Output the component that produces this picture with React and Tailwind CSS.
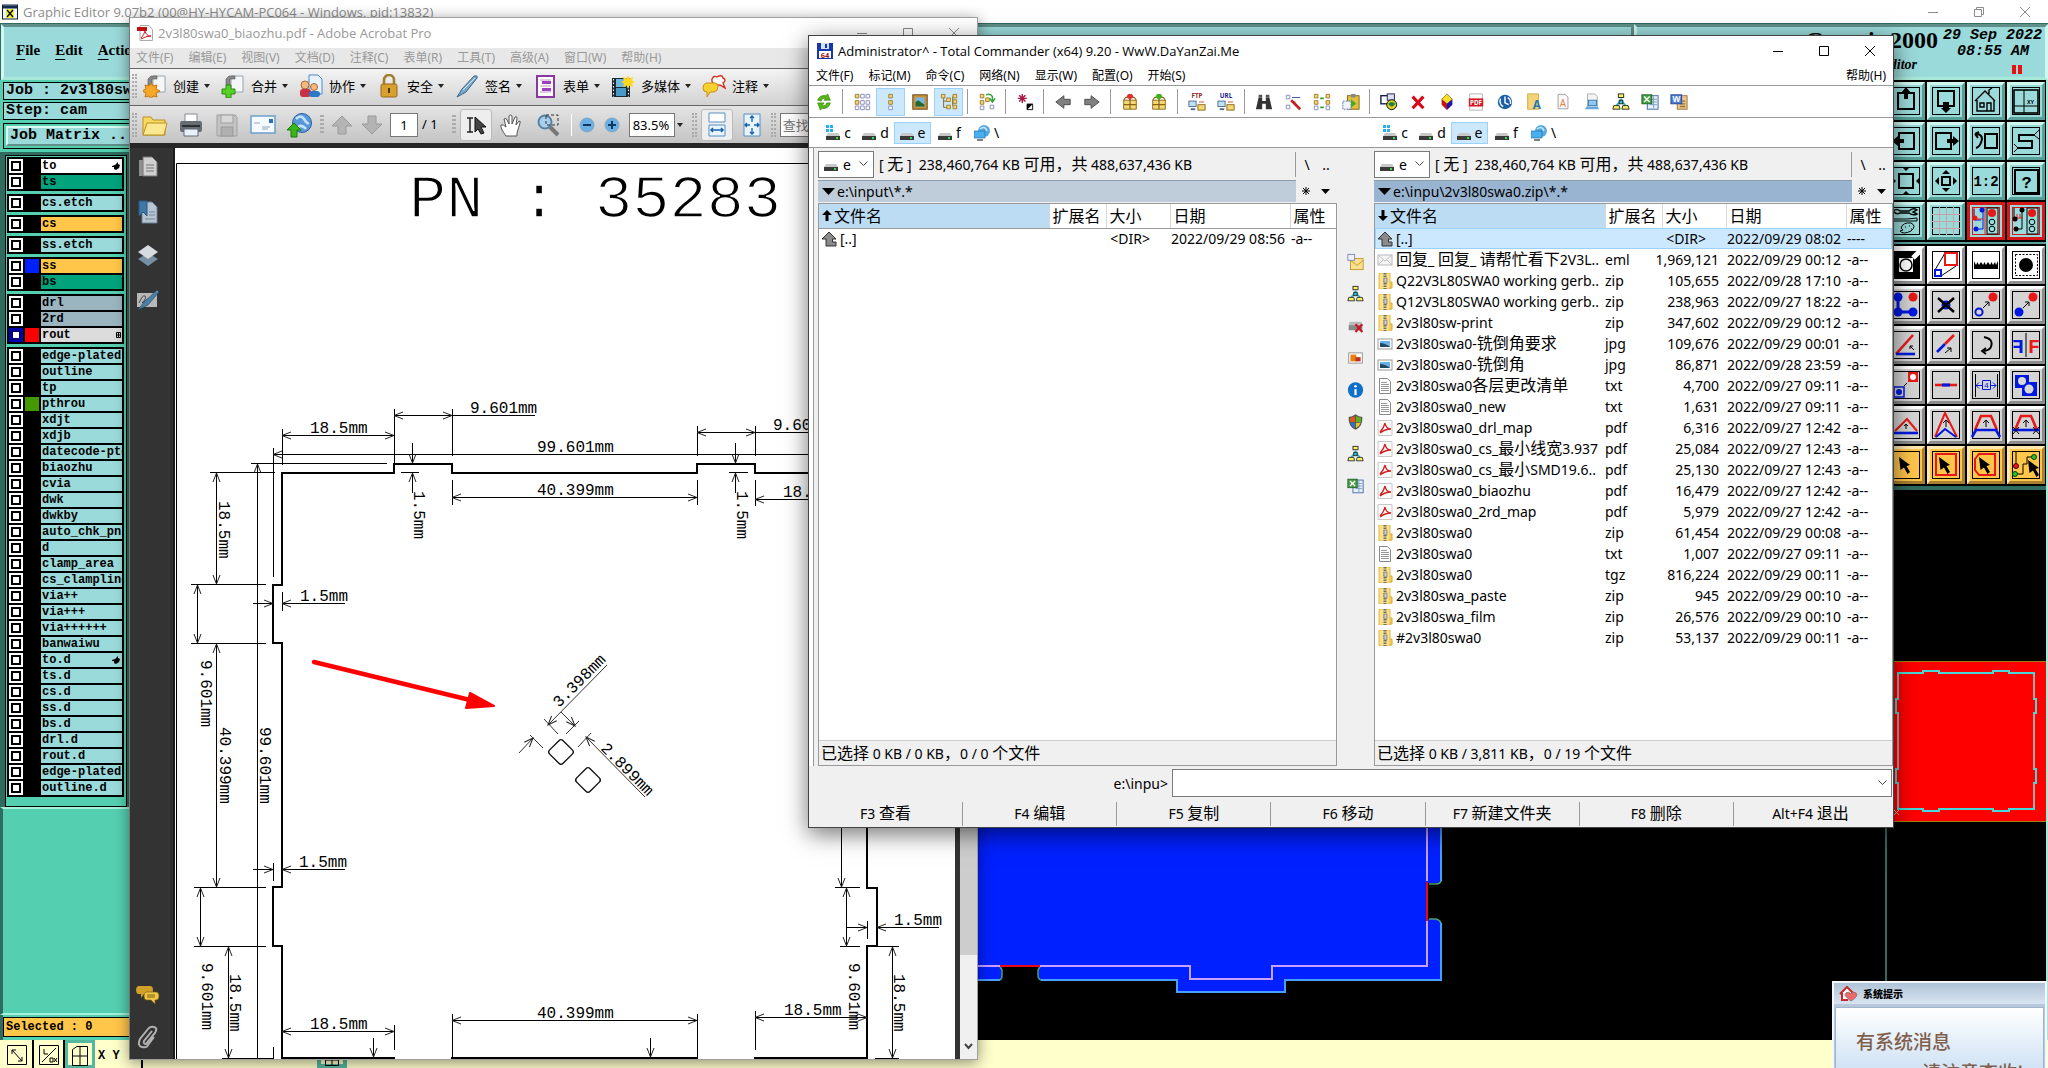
import React from "react";

const SANS = "font-['Noto_Sans','Noto_Sans_CJK_SC',sans-serif]";
const TITLE = "font-['Open_Sans','Noto_Sans_CJK_SC',sans-serif]";
const MONO = "font-['Liberation_Mono','Noto_Sans_CJK_SC',monospace]";

/* Latin text keeps the inherited size, Chinese runs are one step larger. */
function Mixed({ text }) {
  return text.split(/([\u3001-\u9fff\uff00-\uffef]+)/).map((part, i) =>
    i % 2 ? (
      <span key={i} className="text-[16px]">{part}</span>
    ) : (
      <React.Fragment key={i}>{part}</React.Fragment>
    )
  );
}

function Icon({ w = 20, h, vb, children, className = "" }) {
  return (
    <svg width={w} height={h || w} viewBox={vb || `0 0 ${w} ${h || w}`} className={`block shrink-0 ${className}`} aria-hidden="true">
      {children}
    </svg>
  );
}

/* ------------------------------------------------------------------ */
/* CAM editor: layers                                                   */
/* ------------------------------------------------------------------ */

const layerGroups = [
  [{ n: "to", bg: "bg-white", hand: true }, { n: "ts", bg: "bg-[#00a37c]" }],
  [{ n: "cs.etch" }],
  [{ n: "cs", bg: "bg-[#ffc64a]" }],
  [{ n: "ss.etch" }],
  [{ n: "ss", bg: "bg-[#ffc64a]", c: "bg-[#0020ff]" }, { n: "bs", bg: "bg-[#00a37c]" }],
  [{ n: "drl", bg: "bg-[#9ab4c0]" }, { n: "2rd", bg: "bg-[#9ab4c0]" }, { n: "rout", bg: "bg-[#dcdcdc]", c: "bg-[#ff0000]", on: true, grid: true }],
  [
    "edge-plated", "outline", "tp", "pthrou", "xdjt", "xdjb", "datecode-ptd", "biaozhu", "cvia", "dwk", "dwkby",
    "auto_chk_pnl", "d", "clamp_area", "cs_clampline", "via++", "via+++", "via++++++", "banwaiwu", "to.d", "ts.d",
    "cs.d", "ss.d", "bs.d", "drl.d", "rout.d", "edge-plated", "outline.d",
  ].map((n) => ({ n, c: n === "pthrou" ? "bg-[#449900]" : undefined, hand: n === "to.d" })),
];

function Layer({ l }) {
  return (
    <div className="flex h-[14px] gap-[2px]">
      <button aria-label={`select ${l.n}`} className={`flex w-[14px] items-center justify-center ${l.on ? "bg-[#0000b0]" : "bg-white"}`}>
        <span className={`h-[10px] w-[10px] border-2 bg-white ${l.on ? "border-[#000080]" : "border-black"}`} />
      </button>
      <span className={`w-[14px] ${l.c || "bg-black"}`} />
      <button className={`flex flex-1 items-center overflow-hidden pl-[1px] text-left text-[12px] leading-[14px] font-bold whitespace-nowrap ${l.bg || "bg-[#9bdada]"}`}>
        <span className="flex-1">{l.n}</span>
        {l.hand && (
          <Icon w={8} h={8} className="mr-[2px]"><path d="M0 4 L3 3 L6 0 L6 2 L8 3 L7 6 L4 8 L2 7 L2 5 L0 5Z" /></Icon>
        )}
        {l.grid && (
          <Icon w={5} h={6} className="mr-[1px]"><path d="M0.5 .5h4v5h-4zM.5 3h4M2.5 .5v5" fill="none" stroke="#000" /></Icon>
        )}
      </button>
    </div>
  );
}

function LeftColumn() {
  return (
    <aside className={`flex w-[138px] shrink-0 flex-col bg-[#54d0b0] text-black ${MONO}`}>
      <div className="flex flex-col gap-[2px] bg-[#54d0b0] px-[3px] pt-[2px] pb-[3px]">
        <div className="h-[18px] border border-black bg-[#9bdada] pl-[2px] text-[15px] leading-[16px] font-bold whitespace-nowrap">Job : 2v3l80swa0</div>
        <div className="h-[18px] border border-black bg-[#9bdada] pl-[2px] text-[15px] leading-[16px] font-bold whitespace-nowrap">Step: cam</div>
        <button className="mt-[1px] border border-black p-[2px] text-left">
          <span className="block h-[20px] border-2 border-t-[#d8f8f0] border-r-[#5f8f88] border-b-[#5f8f88] border-l-[#d8f8f0] bg-[#9bdada] pl-[2px] text-[15px] leading-[16px] font-bold whitespace-nowrap">Job Matrix ...</span>
        </button>
      </div>
      <div className="bg-[#2f6b5f] pt-[3px] pl-[5px]">
        <div className="w-[122px] border border-black bg-[#54d0b0] pt-[1px] pb-[9px] pl-[1px]">
          <div className="flex w-[117px] flex-col gap-[3px]">
            {layerGroups.map((g, i) => (
              <div key={i} className="flex flex-col gap-[2px] bg-black p-[2px]">
                {g.map((l, j) => <Layer key={j} l={l} />)}
              </div>
            ))}
          </div>
        </div>
      </div>
      <div className="flex-1 border-t-2 border-b-2 border-l-[3px] border-t-[#a8f0dc] border-b-[#a8f0dc] border-l-[#2f6b5f]" />
      <div className="border-l-[3px] border-l-[#2f6b5f] pt-[2px] pb-[3px]">
        <div className="h-[20px] border border-black bg-[#ffc64a] pl-[2px] text-[12px] leading-[18px] font-bold">Selected : 0</div>
      </div>
    </aside>
  );
}

/* ------------------------------------------------------------------ */
/* CAM editor: tool palette                                             */
/* ------------------------------------------------------------------ */

const R = "#e81818";
const B = "#0018e0";
const line = { fill: "none", stroke: "#000", strokeWidth: 2 };
const thin = { fill: "none", stroke: "#000", strokeWidth: 1 };
const red3 = { fill: "none", stroke: R, strokeWidth: 2.6 };
const blue3 = { fill: "none", stroke: B, strokeWidth: 2.6 };
const cursor = "M12 11 L23 19 L19.500 20 L23 26 L20.500 28 L17 21.500 L13.500 24Z";

const paletteTop = [
  ["pan up", <><rect x="11" y="11" width="16" height="16" {...line} /><path d="M19 5 L24 11 H21 V17 H17 V11 H14Z" /></>],
  ["pan down", <><rect x="11" y="9" width="16" height="15" {...line} /><path d="M19 31 L24 26 H22 V20 H16 V26 H14Z" /></>],
  ["home", <><path d="M8 19 L18 9 L28 19 M10 18 V29 H27 V18 M22 12 V8 L25 6 M13 21h4v4h-4z M20 29 V21 H24 V29" {...thin} strokeWidth="1.4" /></>],
  ["view xy", <><rect x="7" y="8" width="24" height="23" {...line} strokeWidth="1.600" /><path d="M17 8 V31 M7 24 H31" {...thin} /><text x="20" y="22" fontSize="6" fontWeight="bold">XY</text></>],
  ["pan left", <><rect x="12" y="11" width="15" height="16" {...line} /><path d="M5 19 L11 14 V17 H17 V21 H11 V24Z" /></>],
  ["pan right", <><rect x="9" y="11" width="15" height="16" {...line} /><path d="M32 19 L26 14 V17 H20 V21 H26 V24Z" /></>],
  ["previous view", <><rect x="18" y="12" width="12" height="14" {...line} /><path d="M8 12 L12 10 M8 12 L11 16 M8 12.500 H12 Q16 14 14.500 19 Q13 25 9 26" {...line} /></>],
  ["serpentine", <><path d="M27 13 H12 V19 H25 V26 H11" {...line} /><path d="M27 13 L32 8 M27 13 L32 17 M11 26 L7 30 M11 26 L7 22" {...thin} /></>],
  ["zoom in", <><rect x="12" y="12" width="14" height="14" {...line} /><path d="M15 5h8l-4 4zM15 33h8l-4-4zM5 15v8l4-4zM33 15v8l-4-4z" /></>],
  ["zoom out", <><rect x="15" y="15" width="8" height="8" {...line} /><path d="M15 12h8l-4-4zM15 26h8l-4 4zM12 15v8l-4-4zM26 15v8l4-4z" /></>],
  ["scale 1:2", <text x="19" y="24" fontSize="14" fontWeight="bold" textAnchor="middle">1:2</text>],
  ["help", <><rect x="8" y="8" width="23" height="23" {...line} /><text x="19.500" y="26" fontSize="17" fontWeight="bold" textAnchor="middle">?</text></>],
  ["options", <><path d="M6 9 Q10 6 13 9 H22 Q26 5 30 8 L26 10 L30 12 Q26 14 22 11 H13 Q9 13 6 9" {...thin} strokeWidth="1.400" /><path d="M6 17 H20 L30 16 V19 L20 19 H6Z" {...thin} /><path d="M14 26 Q16 20 24 21 Q30 24 24 29 Q16 33 13 29 L16 28Z M18 25h1M22 24h1M24 27h1" {...thin} /></>],
  ["grid", <path d="M12.500 5V33M19.500 5V33M26.500 5V33M5 12.500H33M5 19.500H33M5 26.500H33" fill="none" stroke="#c8a0a8" />],
  ["net select", <><path d="M7 7 V18 H14 M16 9 V27 M11 27 H16" fill="none" stroke={B} /><path d="M7 6 V17 M8 17 H16 M18 6 V32" fill="none" stroke={R} /><circle cx="8" cy="16" r="2.500" fill={R} /><circle cx="15" cy="8" r="2.500" fill={B} /><circle cx="9" cy="27" r="2.500" fill={B} /><rect x="20" y="6" width="11" height="26" {...thin} /><circle cx="25" cy="11" r="4" fill={R} /><circle cx="25" cy="20" r="2.800" {...thin} /><circle cx="25" cy="27" r="2.800" {...thin} /></>, true],
  ["net clear", <><path d="M7 6 V16 M15 8 V27 H9" {...thin} /><path d="M8 16H16 M10 16v-4M13 16v-4" fill="none" stroke={R} /><circle cx="8" cy="17" r="2.500" /><circle cx="15" cy="8" r="2.500" /><circle cx="9" cy="27" r="2.500" /><rect x="20" y="6" width="11" height="26" {...thin} /><circle cx="25" cy="11" r="4" fill={R} /><circle cx="25" cy="20" r="2.800" {...thin} /><circle cx="25" cy="27" r="2.800" {...thin} /></>, true],
];

const paletteBottom = [
  ["highlight", <><rect x="5" y="5" width="28" height="28" /><path d="M26 12 L33 5" stroke="#fff" strokeWidth="5" /><rect x="12" y="12" width="14" height="14" fill="#fff" /><circle cx="19" cy="19" r="6" fill="#fff" stroke="#000" strokeWidth="1.500" /></>],
  ["resize", <><path d="M8 24 L18 7 M14 30 L29 20" {...thin} /><rect x="18" y="7" width="12" height="12" fill="none" stroke={R} strokeWidth="2" /><rect x="8" y="24" width="6" height="6" fill="none" stroke={B} strokeWidth="2" /></>],
  ["measure", <path d="M7 15 V23 H31 V15 L29 19 L28 16 L26 19 L24.500 16 L23 19 L21 16 L19 19 L17.500 16 L16 19 L14 16 L12 19 L10.500 16 L9 19Z" />],
  ["feature", <><rect x="8.500" y="8.500" width="22" height="21" {...thin} strokeDasharray="2 1.500" /><circle cx="19" cy="19" r="7" /></>],
  ["copy chain", <><path d="M11 12 V26 H26" fill="none" stroke={B} strokeWidth="3" /><circle cx="11" cy="11" r="4.500" fill={B} /><circle cx="11" cy="26" r="4.500" fill={B} /><circle cx="26" cy="26" r="4.500" fill={B} /><circle cx="26" cy="11" r="4.500" fill={R} /></>],
  ["delete", <><circle cx="19" cy="19" r="4.500" fill={B} /><path d="M11 12 L27 26 M27 12 L11 26" {...line} strokeWidth="2.400" /></>],
  ["move", <><circle cx="12" cy="26" r="3.600" fill="none" stroke={B} strokeWidth="2" /><path d="M16 22 L22 16 M18 16 H22 V20" {...thin} /><circle cx="26" cy="11" r="4.500" fill={R} /></>],
  ["copy", <><circle cx="12" cy="26" r="4.500" fill={B} /><path d="M16 22 L22 16 M18 16 H22 V20" {...thin} /><circle cx="26" cy="11" r="4.500" fill={R} /></>],
  ["angle", <><path d="M9 28 L26 9" {...red3} /><path d="M9 28 H28" {...blue3} /><path d="M27 24 L23 20 M23 23V20H26" {...thin} /></>],
  ["stretch", <><path d="M10 26 L18 18" {...blue3} /><path d="M18 18 L27 9" {...red3} /><path d="M18 27 L24 22 M20 22H24V26" {...thin} /></>],
  ["rotate", <path d="M17 11 Q27 13 24 21 Q22 25 15 25 M19 22 L15 25 L19 28" {...line} strokeWidth="1.800" />],
  ["mirror", <><path d="M19 7V31" {...thin} /><g transform="matrix(-1 0 0 1 38 0)"><text x="21" y="27" fontSize="20" fontWeight="bold" fill={B}>F</text></g><text x="21" y="27" fontSize="20" fontWeight="bold" fill={R}>F</text></>],
  ["pad replace", <><rect x="21" y="6" width="10" height="10" fill={R} /><circle cx="26" cy="11" r="3" fill="#fff" /><rect x="7" y="21" width="10" height="10" fill="none" stroke={B} strokeWidth="1.500" /><circle cx="12" cy="26" r="3" fill={B} /><path d="M17 20 L20 17" {...thin} /></>],
  ["break line", <><path d="M8 19 H30" {...red3} /><path d="M15 19 H23" stroke={B} strokeWidth="3" /></>],
  ["spacing", <><path d="M8.500 8V31M30.500 8V31" {...thin} /><path d="M9 19.500H15M12 16.500l-3 3 3 3M23 19.500H29M26 16.500l3 3-3 3M15.500 14.500h8v9h-8z" fill="none" stroke={B} /><text x="19.500" y="22" fontSize="8" fill={B} textAnchor="middle">4</text></>],
  ["merge", <><path d="M8 9H22V16H30V30H15V22H8Z" fill={B} /><circle cx="15" cy="15" r="4" fill="#d8d8d8" /><circle cx="22" cy="23" r="4.500" fill="#d8d8d8" /></>],
  ["arc 1", <><path d="M8 25 L20 13 L30 25" {...red3} strokeWidth="2" /><path d="M7 27H31" {...blue3} /><path d="M19 23V18M17 20l2-2 2 2" {...thin} /></>],
  ["arc 2", <><path d="M8 31 L18 7 L30 31" {...red3} strokeWidth="2" /><path d="M9 31 L18 23 L29 31" {...blue3} strokeWidth="2" /><path d="M19 21V14M16 17l3-3 3 3" {...thin} /></>],
  ["arc 3", <><path d="M8 24 L14 10 H24 L30 24" {...red3} /><path d="M5 31 L9 24 H29 L33 31" {...blue3} /><path d="M19 21V14M16 17l3-3 3 3" {...thin} /></>],
  ["arc 4", <><path d="M8 24 L14 10 H24 L30 24" {...red3} /><path d="M5 24H33" {...blue3} /><path d="M19 21V14M16 17l3-3 3 3M6 21l6 7M12 21l-6 7M26 21l6 7M32 21l-6 7" {...thin} /></>],
  ["select", <path d={cursor} />],
  ["select box", <><rect x="9" y="8" width="20" height="21" fill="none" stroke={R} strokeWidth="2" /><path d={cursor} /></>],
  ["select polygon", <><path d="M12 8H28V29H12L8 24V13Z" fill="none" stroke={R} strokeWidth="2" /><path d={cursor} /></>],
  ["select net", <><path d="M9 5V20M10 28H16V18H20V11H26" {...thin} /><circle cx="9" cy="20" r="2.500" fill={R} stroke="#400" /><circle cx="8" cy="28" r="2.500" fill="#30c030" stroke="#040" /><circle cx="27" cy="11" r="2.500" fill="#30c030" stroke="#040" /><path d={cursor} transform="translate(9 3)" /></>],
];

const cellTone = {
  cyan: "bg-[#9bdada] border-t-[#d0f8f0] border-l-[#d0f8f0] border-r-[#58a098] border-b-[#58a098]",
  red: "bg-[#9bdada] border-[#d81818]",
  white: "bg-white border-t-white border-l-white border-r-[#909090] border-b-[#909090]",
  gray: "bg-[#d4d4d4] border-t-white border-l-white border-r-[#8c8c8c] border-b-[#8c8c8c]",
  gold: "bg-[#ffc64a] border-t-[#ffe8b0] border-l-[#ffe8b0] border-r-[#a88030] border-b-[#a88030]",
};

function Cell({ name, tone, children }) {
  return (
    <button aria-label={name} className={`flex h-[38px] w-[38px] items-center justify-center border-[3px] ${cellTone[tone]}`}>
      <Icon w={38} vb="0 0 38 38" className={MONO}>
        <rect x="5.500" y="5.500" width="27" height="27" fill="none" stroke={tone === "red" ? "#d81818" : "#000"} />
        {children}
      </Icon>
    </button>
  );
}

function MiniMap() {
  const tabs = "M1898 673H1923V671H1939V673H1993V671H2009V673H2034V699H2036V713H2034V769H2036V783H2034V809H2009V811H1993V809H1939V811H1923V809H1898V783H1896V769H1898V713H1896V699H1898Z";
  return (
    <svg viewBox="1885 490 161 550" preserveAspectRatio="xMinYMin slice" className="block min-h-0 w-full flex-1 bg-black" aria-label="overview">
      <rect x="1884" y="661.500" width="170" height="160" fill="#ff0000" stroke="#a08010" />
      <path d={tabs} fill="none" stroke="#48d8d8" strokeWidth="2" />
      <path d="M1898 676V698M1898 714V768M1898 784V806M2034 676V698M2034 714V768M2034 784V806" stroke="#a8a8a8" strokeWidth="2" />
      <path d="M1894 810l5 5M1899 810l-5 5" stroke="#c0c0c0" />
      <path d="M1886 490V661M1886 822V1040" stroke="#2f6b5f" strokeWidth="2" />
    </svg>
  );
}

function RightColumn() {
  return (
    <aside className="flex w-[163px] shrink-0 flex-col border-r-2 border-[#a8e8d8] bg-black">
      <div className="grid grid-cols-[repeat(4,38px)] gap-[2px] bg-black pt-[2px] pl-[2px]">
        {paletteTop.map(([n, art, red]) => <Cell key={n} name={n} tone={red ? "red" : "cyan"}>{art}</Cell>)}
      </div>
      <div className="my-[2px] h-[2px] bg-[#58a098]" />
      <div className="grid grid-cols-[repeat(4,38px)] gap-[2px] pl-[2px]">
        {paletteBottom.map(([n, art], i) => (
          <Cell key={n} name={n} tone={i < 4 ? "white" : i < 20 ? "gray" : "gold"}>{art}</Cell>
        ))}
      </div>
      <div className="mt-[2px] h-[4px] bg-[#2f6b5f]" />
      <MiniMap />
    </aside>
  );
}

function Canvas() {
  return (
    <svg viewBox="138 80 1747 960" preserveAspectRatio="xMinYMin slice" className="block min-w-0 flex-1 bg-black" aria-label="board view">
      <path d="M900 700H1428V820H1441V881L1438 883H1428V919H1438L1441 922V980H1285V992H1177V980H1040L1038 977V966H1002V977L1000 980H900Z" fill="#0020ff" />
      <path d="M1441 820V881M1441 923V980H1285V992H1177V980H1041M1000 980H900" fill="none" stroke="#48a0ff" strokeWidth="2" />
      <path d="M1441 881Q1440 884 1436 884H1429M1429 919H1436Q1440 920 1441 923M1041 980Q1038 979 1038 975V970L1040 967M1000 980Q1002 979 1002 975V970L1000 967" fill="none" stroke="#4aa070" strokeWidth="1.500" />
      <path d="M900 966H1000M1040 966H1190V979H1272V966H1427V921M1427 881V700" fill="none" stroke="#c8a0ff" strokeWidth="2" />
      <path d="M1000 966H1040M1427 882V921" stroke="#e80818" strokeWidth="2" />
    </svg>
  );
}

function WindowButtons({ color, restore }) {
  return (
    <div className="flex h-full">
      {["minimize", "maximize", "close"].map((n) => (
        <button key={n} aria-label={n} className="flex h-full w-[46px] items-center justify-center">
          <Icon w={12}>
            <g fill="none" stroke={color}>
              {n === "minimize" && <path d="M1 6.500H11" />}
              {n === "maximize" && (restore ? <path d="M1.500 3.500h7v7h-7zM3.500 3.500v-2h7v7h-2" /> : <path d="M1.500 1.500h9v9h-9z" />)}
              {n === "close" && <path d="M1 1L11 11M11 1L1 11" />}
            </g>
          </Icon>
        </button>
      ))}
    </div>
  );
}

function CamEditor() {
  return (
    <div className="flex h-full flex-col">
      <header className={`flex h-[23px] items-center bg-white pl-[2px] text-[13px] text-[#8c8c8c] ${TITLE}`}>
        <Icon w={16}>
          <rect x=".5" y="1" width="15" height="14" fill="#f4f4f4" stroke="#102038" />
          <rect x="1" y="1.500" width="14" height="3" fill="#102a50" />
          <rect x="4" y="5" width="8" height="9" fill="#f0f040" />
          <path d="M5 6L11 13M11 6L5 13" stroke="#000" strokeWidth="1.300" />
        </Icon>
        <h1 className="ml-[5px] flex-1 leading-[20px] whitespace-nowrap">Graphic Editor 9.07b2 (00@HY-HYCAM-PC064 - Windows, pid:13832)</h1>
        <WindowButtons color="#8c8c8c" restore />
      </header>
      <div className="flex h-[57px] bg-[#2f6b5f] pt-[1px] text-black">
        <nav className="ml-[1px] flex flex-1 items-center gap-[15px] border-[3px] border-t-[#5f8f88] border-r-[#5f8f88] border-b-[#a8e8d8] border-l-[#d0f8f0] bg-[#9bdada] pb-[4px] pl-[12px] font-['Liberation_Serif',serif] text-[15px] font-bold">
          {["File", "Edit", "Actions"].map((m) => (
            <button key={m}><span className="underline underline-offset-4">{m[0]}</span>{m.slice(1)}</button>
          ))}
        </nav>
        <div className="flex w-[414px] border-[3px] border-t-[#5f8f88] border-r-[#d0f8f0] border-b-[#a8e8d8] border-l-[#d0f8f0] bg-[#9bdada] pl-[167px]">
          <div className="w-[138px] shrink-0 pr-[4px] text-right font-['Liberation_Serif',serif] font-bold whitespace-nowrap">
            <p className="text-[24px] leading-[26px]">Genesis 2000</p>
            <p className="mt-[3px] pr-[21px] text-[14px] leading-[18px] italic">Graphic Editor</p>
          </div>
          <div className={`w-[100px] shrink-0 pt-[1px] pl-[1px] text-[15px] leading-[16px] font-bold whitespace-nowrap italic ${MONO}`}>
            <p>29 Sep 2022</p>
            <p className="pl-[14px]">08:55 AM</p>
            <div className="mt-[5px] flex gap-[2px] pl-[69px]">
              <span className="h-[9px] w-[4px] bg-[#e81010]" />
              <span className="h-[9px] w-[4px] bg-[#e81010]" />
            </div>
          </div>
        </div>
      </div>
      <main className="flex min-h-0 flex-1">
        <LeftColumn />
        <Canvas />
        <RightColumn />
      </main>
      <footer className={`flex h-[28px] bg-[#ffffcc] pl-[2px] text-[12px] font-bold ${MONO}`}>
        <button aria-label="zoom area" className="flex w-[32px] justify-center border-r-2 border-black pt-[5px]">
          <Icon w={20}><path d="M.5 .5h19v19H.5zM5 5L15 16M5 9V5H9M15 12V16H11" {...thin} /></Icon>
        </button>
        <button aria-label="toggle units" className="flex w-[31px] justify-center border-r-2 border-black pt-[5px]">
          <Icon w={20}><path d="M.5 .5h19v19H.5zM3 17L17 3M5 4V9H9M11 13h3v4h-3zM15 13l3 4M18 13l-3 4" {...thin} /></Icon>
        </button>
        <button aria-label="snap" className="flex w-[30px] justify-center border-[3px] border-[#54b8a0] pt-[3px]">
          <Icon w={16} h={20}><path d="M.5 3.500L5 .5H15.500V19.500H.5zM8 .5V19.500M.5 10H15.500" {...thin} /></Icon>
        </button>
        <span className="w-[48px] border-r-2 border-black pl-[3px] leading-[32px]">X Y</span>
        <span className="w-[174px]" />
        <button aria-label="layers" className="flex w-[30px] justify-center border-4 border-[#54b8a0] pt-[2px]">
          <Icon w={14} h={20}><path d="M.5 .5h13v19H.5zM7 .5V19M.5 14H13" {...thin} /></Icon>
        </button>
      </footer>
    </div>
  );
}

/* ------------------------------------------------------------------ */
/* Acrobat                                                              */
/* ------------------------------------------------------------------ */

/* Arrow head whose tip is at (x, y); a is the direction in degrees, 0 = right. */
function Head({ x, y, a }) {
  return <path d="M-9 -3.500 L0 0 L-9 3.500" transform={`translate(${x} ${y}) rotate(${a})`} fill="none" stroke="#222" />;
}

const heads = [
  [282, 435.5, 180], [394, 435.5, 0], [394, 415.5, 180], [452, 415.5, 0], [273, 454.5, 180], [697, 432.5, 180], [755, 432.5, 0],
  [452, 497.5, 180], [697, 497.5, 0], [755, 499.5, 180], [412.5, 463, 90], [412.5, 473, 270], [735.5, 463, 90], [735.5, 473, 270],
  [257.5, 464, 270], [216.5, 473, 270], [216.5, 584, 90], [197.5, 585, 270], [197.5, 643, 90], [216.5, 644, 270], [216.5, 887, 90],
  [273, 603.5, 0], [282, 603.5, 180], [273, 869.5, 0], [282, 869.5, 180], [200.5, 888, 270], [200.5, 946, 90], [228.5, 947, 270],
  [228.5, 1058, 90], [282, 1031.5, 180], [394, 1031.5, 0], [452, 1020.5, 180], [697, 1020.5, 0], [373.5, 1057, 90], [650.5, 1057, 90],
  [841.5, 887, 90], [846.5, 888, 270], [846.5, 946, 90], [867, 927.5, 0], [877, 927.5, 180], [892.5, 947, 270], [892.5, 1058, 90],
  [755, 1017.5, 180], [867, 1017.5, 0], [548, 725, 133], [575, 726, 47], [586, 737, 227], [533, 738, 313],
];

const dims = [
  [310, 433, "18.5mm"], [470, 413, "9.601mm"], [537, 452, "99.601mm"], [773, 430, "9.601mm"], [537, 495, "40.399mm"],
  [783, 497, "18.5mm"], [300, 601, "1.5mm"], [299, 867, "1.5mm"], [310, 1029, "18.5mm"], [537, 1018, "40.399mm"],
  [894, 925, "1.5mm"], [784, 1015, "18.5mm"],
  [414, 491, "1.5mm", 90], [737, 491, "1.5mm", 90], [219, 501, "18.5mm", 90], [201, 660, "9.601mm", 90], [220, 727, "40.399mm", 90],
  [260, 727, "99.601mm", 90], [202, 963, "9.601mm", 90], [230, 974, "18.5mm", 90], [849, 963, "9.601mm", 90], [894, 974, "18.5mm", 90],
  [559, 708, "3.398mm", -45], [600, 749, "2.899mm", 45],
];

function Drawing() {
  return (
    <svg viewBox="175 148 780 912" preserveAspectRatio="xMinYMin slice" className="block min-w-0 flex-1 bg-white font-['Liberation_Mono',monospace]" aria-label="drawing">
      <path d="M955 163.500H176.500V1060" fill="none" stroke="#000" />
      <text x="409" y="217" fontSize="62" stroke="#fff" strokeWidth="1.500">PN : 35283</text>
      <path d="M830 473H755V464H697V473H452V464H394V473H282V585H273V643H282V887H273V946H282V1058H394V1060M452 1060V1058H697V1060M755 1060V1058H867V946H877V888H867V820" fill="none" stroke="#000" strokeWidth="2" />
      <path
        d="M282.500 429V465M394.500 409V464M282 435.500H394M394 415.500H535M452.500 409V456M273 454.500H830M273.500 448V577M697 432.500H830M697.500 426V456M755.500 426V456M452 497.500H697M452.500 480V505M697.500 480V505M755 499.500H830M755.500 480V506M412.500 443V463M412.500 473V493M401 472.500H419M735.500 443V463M735.500 473V493M729 472.500H748M251 463.500H387M210 472.500H275M257.500 464V1060M216.500 473V584M191 584.500H266M191 643.500H266M197.500 585V643M216.500 644V887M253 603.500H273M282 603.500H345M282.500 592V611M253 869.500H273M282 869.500H345M273.500 863V881M194 887.500H266M194 946.500H266M200.500 888V946M228.500 947V1058M222 1058.500H274M273.500 1047V1060M282 1031.500H394M394.500 1025V1050M452 1020.500H697M452.500 1014V1058M697.500 1014V1058M373.500 1038V1058M650.500 1038V1058M841.500 820V887M835 887.500H860M846.500 888V946M840 946.500H860M847 927.500H867M867.500 921V939M877 927.500H939M870 946.500H899M892.500 947V1058M875 1058.500H899M755 1017.500H867M755.500 1011V1050"
        fill="none" stroke="#000"
      />
      <path d="M548 725L607 665M561 712L575 726M544 719L558 734M579 721L566 734M586 737L645 797M591 733L578 747M519 753L533 738M530 735L543 748" fill="none" stroke="#333" />
      {heads.map(([x, y, a], i) => <Head key={i} x={x} y={y} a={a} />)}
      {dims.map(([x, y, t, a], i) => (
        <text key={i} fontSize="16" transform={`translate(${x} ${y}) rotate(${a || 0})`}>{t}</text>
      ))}
      <rect x="-9.500" y="-9.500" width="19" height="19" rx="3" transform="translate(561 752) rotate(45)" fill="none" stroke="#111" strokeWidth="1.400" />
      <rect x="-9.500" y="-9.500" width="19" height="19" rx="3" transform="translate(588 780) rotate(45)" fill="none" stroke="#111" strokeWidth="1.400" />
      <path d="M314 662L470 700" stroke="#f00" strokeWidth="4.500" strokeLinecap="round" />
      <path d="M470 693L494 706L466 708Z" fill="#f00" stroke="#f00" strokeWidth="2" strokeLinejoin="round" />
    </svg>
  );
}

const page = (
  <><path d="M10 2h12v16H10z" fill="#f4f6f8" stroke="#9aa4ae" /><path d="M5 5l3-3h6v3H9v6H5z" fill="#888" stroke="#555" strokeWidth=".6" /></>
);
const tasks = [
  ["创建", <>{page}<path d="M8 9l2 3 4-1-1 4 4 2-4 2 1 4-4-1-2 3-2-3-4 1 1-4-4-2 4-2-1-4 4 1z" fill="#f8a828" stroke="#c07810" /></>],
  ["合并", <>{page}<path d="M5 11h5v4h4v5h-4v4H5v-4H1v-5h4z" fill="#58d028" stroke="#2a8a10" /></>],
  ["协作", <><path d="M10 1h9l4 4v15H10z" fill="#e8f2fc" stroke="#4a8ad0" /><circle cx="6" cy="11" r="4" fill="#f4b880" stroke="#a86830" /><rect x="1" y="15" width="11" height="8" rx="3" fill="#c83048" /><circle cx="15" cy="13" r="3.500" fill="#f4b880" stroke="#a86830" /><rect x="10" y="17" width="11" height="6" rx="3" fill="#2a78c8" /></>],
  ["安全", <><path d="M7 11V6a5 5 0 0110 0v5" fill="none" stroke="#a08030" strokeWidth="2.600" /><rect x="4" y="10" width="16" height="13" rx="1.500" fill="#d8a030" stroke="#94681a" /><path d="M12 14v5" stroke="#503808" strokeWidth="2" /></>],
  ["签名", <><path d="M2 23L7 15 19 2Q23 1 22 4L11 18Z" fill="#78a8cc" stroke="#3a6488" /><path d="M8 16L20 4" stroke="#d8ecf8" /></>],
  ["表单", <><rect x="4" y="2" width="17" height="21" fill="#fff" stroke="#8838a0" strokeWidth="2" /><path d="M7 6h11M7 12h11M7 18h11" stroke="#b8a0c0" /><rect x="9" y="7" width="9" height="3" fill="#a040c0" /><rect x="9" y="14" width="9" height="3" fill="#a040c0" /></>],
  ["多媒体", <><rect x="1" y="4" width="18" height="19" fill="#1c2830" /><rect x="5" y="5" width="10" height="8" fill="#70b8e0" /><rect x="5" y="14" width="10" height="8" fill="#4898c8" /><path d="M2.500 5v18M17.500 5v18" stroke="#fff" strokeDasharray="1.500 2" /><path d="M17 1l1.500 3.500L22 3l-1 3.500 3 1.500-3 1.500 1 3.500-3.500-1.500L17 15l-1.500-3.500L12 13l1-3.500L10 8l3-1.500L12 3l3.500 1.500z" fill="#ffd820" /></>],
  ["注释", <><path d="M10 5Q12 1 15 3Q20 0 21 4Q25 6 21 9L23 14 18 11Q9 12 10 5" fill="#fff" stroke="#d83020" strokeWidth="1.400" /><path d="M4 9h9q3 0 3 4t-4 5H8l-3 5v-5Q1 18 1 14t3-5" fill="#f8d030" stroke="#c89010" /></>],
];

const drop = "h-0 w-0 border-x-[3px] border-t-[4px] border-x-transparent border-t-[#222]";

function Grip() {
  return <span className="h-[24px] w-[5px] shrink-0 border-x-2 border-dotted border-[#aaa]" />;
}

function Slot({ name, w = "w-[36px]", on, children }) {
  return (
    <button aria-label={name} className={`flex h-[32px] shrink-0 items-center justify-center rounded-[3px] ${w} ${on ? "border border-[#bbb] bg-[#eee]" : ""}`}>
      <Icon w={26} vb="0 0 26 26">{children}</Icon>
    </button>
  );
}

const sideIcons = [
  ["pages", <><path d="M3 4h12v16H3z" fill="#8f8f8f" /><path d="M7 1h9l5 5v14H7z" fill="#d0d0d0" stroke="#777" /><path d="M10 9h8M10 12h8M10 15h8" stroke="#777" /></>],
  ["bookmarks", <><path d="M6 2h10l5 5v16H6z" fill="#b8c4d0" stroke="#6a8098" /><path d="M3 1h8v15l-4-4-4 4z" fill="#3f78a8" stroke="#28587c" /><path d="M13 12h6M13 15h6M9 19h10" stroke="#7088a0" /></>],
  ["layers", <><path d="M12 9L22 15 12 22 2 15z" fill="#7890a4" /><path d="M12 1L22 8 12 15 2 8z" fill="#d8dce0" /></>],
  ["signatures", <><path d="M1 5h20v14H1z" fill="#b8b8b8" /><path d="M3 15q4-9 6-7t-3 7q4-3 6-4" fill="none" stroke="#444" /><path d="M2 22L8 14 21 2 23 4 12 17z" fill="#4a80a8" stroke="#28485c" strokeWidth=".6" /></>],
];

function Acrobat() {
  const menus = ["文件(F)", "编辑(E)", "视图(V)", "文档(D)", "注释(C)", "表单(R)", "工具(T)", "高级(A)", "窗口(W)", "帮助(H)"];
  return (
    <section aria-label="Adobe Acrobat Pro" className={`absolute top-[17px] left-[129px] flex h-[1043px] w-[849px] flex-col border border-[#a0a0a0] border-l-[#777] bg-white shadow-[0_3px_14px_rgba(0,0,0,0.45)] ${SANS}`}>
      <header className={`flex h-[30px] shrink-0 items-center pl-[7px] text-[13px] text-[#999] ${TITLE}`}>
        <Icon w={16}>
          <path d="M3 .5h9l3.500 4v11H3z" fill="#fff" stroke="#aaa" />
          <path d="M0 2h10v4H0z" fill="#c01010" />
          <path d="M4 13q3-3 4-7 1 5 6 5-5 0-10 3" fill="none" stroke="#d02020" />
        </Icon>
        <h2 className="ml-[5px] flex-1 leading-[20px] whitespace-nowrap">2v3l80swa0_biaozhu.pdf - Adobe Acrobat Pro</h2>
        <WindowButtons color="#888" />
      </header>
      <nav className="flex h-[20px] shrink-0 items-center gap-[15px] bg-[#e8e8e8] pl-[6px] text-[12px] leading-[18px] whitespace-nowrap text-[#999]">
        {menus.map((m) => <button key={m}>{m}</button>)}
      </nav>
      <div className="flex h-[37px] shrink-0 items-center border-t border-[#666] bg-linear-to-b from-[#f4f4f4] to-[#d2d2d2] pb-[2px] pl-[2px] text-[13px] text-black">
        <Grip />
        <div className="ml-[6px] flex">
          {tasks.map(([t, art]) => (
            <button key={t} className="mr-[11px] flex items-center leading-[20px] whitespace-nowrap">
              <Icon w={24}>{art}</Icon>
              <span className="mr-[5px] ml-[6px]">{t}</span>
              <span className={drop} />
            </button>
          ))}
        </div>
      </div>
      <div className="flex h-[38px] shrink-0 items-center overflow-hidden border-t border-[#666] bg-linear-to-b from-[#e4e4e4] to-[#c4c4c4] pl-[2px] text-[13px] text-black">
        <Grip />
        <Slot name="open"><path d="M1 5h8l2 3h12v15H1z" fill="#f8d860" stroke="#b89020" /><path d="M5 11h20l-3 12H1z" fill="#fbe890" stroke="#b89020" /></Slot>
        <Slot name="print"><path d="M7 2h12v8H7z" fill="#fff" stroke="#889" /><rect x="2" y="9" width="22" height="11" rx="2" fill="#666e74" /><rect x="4" y="13" width="18" height="2" fill="#2a2e30" /><path d="M6 17h14v7H6z" fill="#e8f2fa" stroke="#667" /></Slot>
        <Slot name="save"><path d="M3 3h18l2 2v19H3z" fill="#c4c4c4" stroke="#a0a0a0" /><rect x="7" y="3" width="12" height="8" fill="#d8d8d8" stroke="#a0a0a0" /><rect x="7" y="15" width="12" height="9" fill="#b0b0b0" stroke="#999" /></Slot>
        <Slot name="mail"><rect x="1" y="4" width="24" height="17" fill="#f4faff" stroke="#6aa0cc" strokeWidth="1.500" /><rect x="19" y="7" width="4" height="4" fill="#2a70b8" /><path d="M4 11h6M12 15h8M12 17h6" stroke="#90a8b8" /></Slot>
        <Slot name="web"><circle cx="16" cy="11" r="9.500" fill="#5898d8" stroke="#28609c" /><path d="M10 7q5-5 8 0t5 4M12 15q4-3 8 2" fill="none" stroke="#c8e4fc" strokeWidth="2.500" /><path d="M8 11L15 18H11V25H5V18H1z" fill="#38b818" stroke="#1c7808" /></Slot>
        <span className="mx-[3px]"><Grip /></span>
        <Slot name="previous page" w="w-[30px]"><path d="M13 4L23 14H17V22H9V14H3z" fill="#b4b4b4" stroke="#999" /></Slot>
        <Slot name="next page" w="w-[30px]"><path d="M13 22L23 12H17V4H9V12H3z" fill="#b4b4b4" stroke="#999" /></Slot>
        <label className="ml-[3px] flex items-center gap-[4px] whitespace-nowrap">
          <input aria-label="page" defaultValue="1" className="h-[24px] w-[28px] border border-[#777] bg-white text-center" />/ 1
        </label>
        <span className="mr-[4px] ml-[14px]"><Grip /></span>
        <Slot name="select tool" w="w-[32px]" on><path d="M4 6h6M7 6v14M4 20h6" fill="none" stroke="#222" strokeWidth="1.500" /><path d="M12 5L23 15H18L21 21 18 22 15 17 12 20z" fill="#444" stroke="#111" /></Slot>
        <Slot name="hand tool" w="w-[38px]"><path d="M8 24Q2 16 3 13 5 12 8 15L6 7Q8 5 9 8L11 12 11 4Q13 2 14 4V12L17 5Q19 4 19 6L18 13 21 9Q23 9 22 11L19 21V24z" fill="#fff" stroke="#555" /></Slot>
        <Slot name="marquee zoom" w="w-[38px]"><circle cx="9" cy="10" r="6.500" fill="#a8d0ee" stroke="#5880a0" strokeWidth="2" /><path d="M14 15L22 23" stroke="#777" strokeWidth="4" /><path d="M10 3h12v10H10z" fill="none" stroke="#333" strokeDasharray="3 2" /></Slot>
        <span className="mx-[3px] h-[22px] w-px shrink-0 bg-white" />
        <Slot name="zoom out" w="w-[25px]"><circle cx="13" cy="13" r="7" fill="#6ab0e4" stroke="#88a8c0" /><path d="M9 13h8" stroke="#103860" strokeWidth="2" /></Slot>
        <Slot name="zoom in" w="w-[25px]"><circle cx="13" cy="13" r="7" fill="#6ab0e4" stroke="#88a8c0" /><path d="M9 13h8M13 9v8" stroke="#103860" strokeWidth="2" /></Slot>
        <input aria-label="zoom" defaultValue="83.5%" className="ml-[4px] h-[24px] w-[46px] shrink-0 border border-[#777] bg-white pl-[3px]" />
        <button aria-label="zoom levels" className="mr-[9px] ml-[2px] shrink-0"><span className={`block ${drop}`} /></button>
        <Grip />
        <Slot name="fit width" w="ml-[4px] w-[32px]" on><path d="M5 1h16v9H5z" fill="#fff" stroke="#5890c0" /><path d="M5 13h16v11H5z" fill="#e8f4ff" stroke="#5890c0" /><path d="M7 18h12M9 16l-2 2 2 2M17 16l2 2-2 2" fill="none" stroke="#1860a8" strokeWidth="1.500" /></Slot>
        <Slot name="fit page" w="w-[38px]"><path d="M5 2h16v22H5z" fill="#e8f4ff" stroke="#5890c0" /><path d="M13 4v6M11 6l2-2 2 2M13 22v-6M11 20l2 2 2-2M6 13h5M8 11l-2 2 2 2M20 13h-5M18 11l2 2-2 2" fill="none" stroke="#1860a8" strokeWidth="1.300" /></Slot>
        <Grip />
        <input aria-label="find" placeholder="查找" className="ml-[4px] h-[24px] min-w-0 flex-1 border border-[#777] bg-white pl-[2px] placeholder:text-[#777]" />
      </div>
      <div className="flex min-h-0 flex-1 border-t-[5px] border-[#262626] bg-[#333]">
        <aside className="flex w-[45px] shrink-0 flex-col items-center gap-[18px] border-r-2 border-[#1c1c1c] pt-[8px] pr-[8px] pb-[10px]">
          {sideIcons.map(([n, art]) => <button key={n} aria-label={n}><Icon w={24} h={26} vb="0 0 24 26">{art}</Icon></button>)}
          <button aria-label="comments" className="mt-auto">
            <Icon w={24}><path d="M2 3h12q3 0 3 4t-3 4H8l-3 4v-4H2q-2-1-2-4t2-4" fill="#d0a028" /><path d="M10 9h10q3 0 3 4t-3 4h-1v4l-4-4h-5q-2-1-2-4t2-4" fill="#f0c848" stroke="#806010" strokeWidth=".7" /><path d="M11 12h8M11 14h8" stroke="#806010" /></Icon>
          </button>
          <button aria-label="attachments">
            <Icon w={24}><path d="M16 6L8 16q-1 3 2 3L19 8q3-5-1-6t-6 2L4 14q-3 7 2 8t6-2l6-8" fill="none" stroke="#b0b0b0" strokeWidth="2" /></Icon>
          </button>
        </aside>
        <Drawing />
        <span className="w-[5px] shrink-0 bg-[#333]" />
        <div className="flex w-[17px] shrink-0 flex-col bg-[#f0f0f0]">
          <div className="h-[807px] bg-[#cdcdcd]" />
          <button aria-label="scroll down" className="mt-auto flex h-[17px] justify-center"><Icon w={9} h={8}><path d="M1 2L4.500 6 8 2" fill="none" stroke="#444" strokeWidth="2" /></Icon></button>
        </div>
      </div>
    </section>
  );
}

/* ------------------------------------------------------------------ */
/* Total Commander                                                      */
/* ------------------------------------------------------------------ */

const Y = "#f4d878";
const node = (x, y, c = Y) => <path d={`M${x + 0.5} ${y + 0.5}h4v4h-4z`} fill={c} stroke={c === Y ? "#9a7828" : "#8088b8"} />;
const org = (
  <><path d="M10 6v4M10 8L5 14M10 8l5 6" stroke="#30a8b8" strokeWidth="2" /><rect x="7" y="1" width="6" height="4" fill="#f4f060" stroke="#222" /><rect x="8" y="8" width="4" height="4" fill="#30c8d8" stroke="#222" /><path d="M2 14h6l1 4H1zM12 14h6l1 4h-8z" fill="#f4f060" stroke="#222" /></>
);
const excel = (
  <><rect x="7" y="3" width="12" height="15" fill="#e8f0fa" stroke="#3a60a8" /><path d="M10 7h8M10 10h8M10 13h8M14 4v13" stroke="#7898c8" /><rect x="1" y="2" width="11" height="10" fill="#48a048" stroke="#1c6020" /><path d="M3.500 4l6 6M9.500 4l-6 6" stroke="#fff" strokeWidth="1.600" /></>
);
const gift = (c) => (
  <><path d="M3 8h14v10H3z" fill={Y} stroke="#8a6410" /><path d="M3 8l2-3h10l2 3M10 6v12M3 13h14" fill="none" stroke="#8a6410" strokeWidth="1.300" /><path d="M10 8L6 4 8 1h4l2 3z" fill={c} /></>
);
const net = (
  <><rect x="1" y="9" width="8" height="6" fill="#c0e0f4" stroke="#486890" /><path d="M3 18h5" stroke="#486890" strokeWidth="2" /><rect x="11" y="13" width="8" height="6" fill={Y} stroke="#8a6410" /><path d="M12 10h6" stroke="#c05020" /></>
);

const tools = [
  ["refresh", <><path d="M3 8q2-6 9-5l2-2 3 7-7 0 2-2Q8 5 7 9z" fill="#58b818" stroke="#388808" strokeWidth=".8" /><path d="M17 11q-2 7-9 6l-2 2-3-8h7l-2 3q4 1 5-3z" fill="#58b818" stroke="#388808" strokeWidth=".8" /></>],
  null,
  ["brief", <>{node(2, 1)}{node(2, 8)}{node(2, 14, "#fff")}{[8, 14].map((x) => [1, 8, 14].map((y) => <g key={x + "-" + y}>{node(x, y, "#fff")}</g>))}</>],
  ["full", <>{node(7, 1)}{node(7, 8)}{node(7, 14, "#fff")}</>, true],
  ["thumbnails", <><rect x="2" y="2" width="16" height="16" fill="#c89038" stroke="#604010" /><rect x="5" y="5" width="10" height="10" fill="#78b8e8" /><path d="M5 15V10l3-2 7 5v2z" fill="#206830" /></>],
  ["tree", <><path d="M4 4v12h4M4 9h5M14 4v10" fill="none" stroke="#8a6410" />{node(1, 1)}{node(7, 5)}{node(7, 13)}{node(14, 1)}{node(14, 7)}{node(14, 13)}</>, true],
  null,
  ["dir tree", <>{node(2, 1)}{node(2, 8)}{node(2, 14, "#fff")}{node(8, 5)}<path d="M9 2q5-2 7 2v5M13 6l3 4 3-4" fill="none" stroke="#30a030" strokeWidth="1.600" />{node(13, 13, "#fff")}</>],
  null,
  ["invert selection", <><path d="M7 1v10M2 6h10M3.500 2.500l7 7M10.500 2.500l-7 7" stroke="#a81840" strokeWidth="1.600" /><path d="M12.500 12.500h6v6h-6z" fill="#fff" stroke="#000" /><path d="M12 12h7l-7 7z" /></>],
  null,
  ["back", <path d="M2 10L11 3v4h7v6h-7v4z" fill="#808080" stroke="#484848" />],
  ["forward", <path d="M18 10L9 3v4H2v6h7v4z" fill="#808080" stroke="#484848" />],
  null,
  ["pack", gift("#e03030")],
  ["unpack", gift("#40b020")],
  null,
  ["ftp", <>{net}<text x="10" y="6" fontSize="7" fontWeight="bold" textAnchor="middle" fill="#903030">FTP</text></>],
  ["url", <>{net}<text x="10" y="6" fontSize="7" fontWeight="bold" textAnchor="middle" fill="#202890">URL</text></>],
  null,
  ["search", <><path d="M4 5h4v4h4V5h4l3 13h-7v-6H8v6H1z" fill="#333" /><path d="M4 2h4v3H4zM12 2h4v3h-4z" fill="#555" /></>],
  ["multi rename", <>{node(2, 2, "#fff")}{node(2, 13, "#fff")}<path d="M9 5h9M9 10h4" stroke="#3048a8" /><path d="M8 8L18 18" stroke="#c82020" strokeWidth="3" /></>],
  ["synchronize", <>{node(1, 1)}{node(1, 8)}{node(14, 1)}{node(14, 8)}{node(1, 14, "#fff")}{node(14, 14, "#fff")}<path d="M8 6h4M8 16h4" stroke="#30a030" strokeWidth="2" /></>],
  ["copy to clipboard", <><rect x="6" y="3" width="13" height="15" fill="#e0c040" stroke="#806010" /><rect x="10" y="1" width="5" height="4" fill="#888" /><rect x="1" y="9" width="9" height="9" fill="#f0f4ff" stroke="#6068a8" strokeDasharray="2 1" /><path d="M10 7l6 5-6 4z" fill="#50a820" /></>],
  null,
  ["network", <><rect x="1" y="3" width="10" height="9" fill="#fff" stroke="#101848" strokeWidth="1.500" /><rect x="8" y="1" width="8" height="7" fill="#dde" stroke="#101848" /><circle cx="13" cy="13" r="5.500" fill="#d8d030" stroke="#000" /><path d="M9 12q4-4 8 0-4 6-8 0" fill="#208040" /></>],
  ["delete", <path d="M4 4L16 17M16 4L4 17" stroke="#d80818" strokeWidth="3.500" />],
  ["cube", <><path d="M10 1l6 6-6 5-6-5z" fill="#f8e020" stroke="#333" strokeWidth=".6" /><path d="M4 7l6 5v7l-6-6z" fill="#c81010" /><path d="M16 7l-6 5v7l6-6z" fill="#1818b0" /></>],
  ["pdf", <><rect x="3" y="1" width="14" height="18" fill="#fff" stroke="#b0b0b0" /><rect x="2" y="6" width="16" height="9" fill="#d81820" /><text x="10" y="13" fontSize="7" fontWeight="bold" fill="#fff" textAnchor="middle">PDF</text></>],
  ["timer", <><circle cx="10" cy="10" r="8" fill="#1a60a8" /><path d="M10 4v7l4 2M5 6q-2 6 3 9M13 5q4 3 3 7" fill="none" stroke="#fff" strokeWidth="1.600" /></>],
  ["font folder", <><rect x="3" y="1" width="12" height="17" fill="#f4d478" stroke="#d0a840" /><text x="13" y="18" fontSize="13" fontWeight="bold" fill="#2878a8" textAnchor="middle">A</text></>],
  ["font file", <><path d="M4.500 1.500h8l3 3v13h-11z" fill="#fafafa" stroke="#999" /><text x="10" y="15" fontSize="11" fill="#e88048" textAnchor="middle">A</text></>],
  ["computer", <><path d="M5 1h8l3 3v13H5z" fill="#f4f4f4" stroke="#aaa" /><rect x="6" y="8" width="9" height="6" fill="#90c8f0" stroke="#3878b0" /><path d="M4 15h12l2 3H2z" fill="#68a8e0" /></>],
  ["structure", org],
  ["excel", excel],
  ["word", <><rect x="8" y="3" width="11" height="15" fill="#e8c890" stroke="#a07030" /><path d="M11 9h6M11 12h6M11 15h6" stroke="#a07030" strokeWidth="1.500" /><rect x="1" y="2" width="12" height="10" fill="#5080d0" stroke="#2040a0" /><text x="7" y="10.500" fontSize="9" fontWeight="bold" fill="#fff" textAnchor="middle">W</text></>],
];

const gutterTools = [
  ["mail folder", <><rect x="4" y="6" width="15" height="13" fill="#f8e090" stroke="#c09020" /><path d="M4 8l8 6 7-6" fill="none" stroke="#c09020" /><rect x="1" y="1" width="8" height="7" fill="#f0f0ff" stroke="#7080b0" /></>],
  ["structure", org],
  ["disconnect", <><path d="M3 5h14l1 4H2z" fill="#bbb" /><rect x="2" y="9" width="16" height="6" fill="#888" /><path d="M10 8l8 9M18 8l-8 9" stroke="#c81828" strokeWidth="2.600" /></>],
  ["picture", <><rect x="2" y="4" width="16" height="12" fill="#fff" stroke="#888" /><rect x="4" y="6" width="7" height="8" fill="#e88010" /><rect x="10" y="9" width="6" height="5" fill="#c03020" /></>],
  ["info", <><circle cx="10" cy="10" r="9" fill="#1070c8" /><path d="M10 9v7" stroke="#fff" strokeWidth="2.600" /><circle cx="10" cy="5.500" r="1.500" fill="#fff" /></>],
  ["security", <><path d="M10 1Q6 4 2 4 1 15 10 19 19 15 18 4 14 4 10 1" fill="#555" /><path d="M9.500 3Q6 5 3.500 5V10H9.500z" fill="#e05818" /><path d="M10.500 3Q14 5 16.500 5V10H10.500z" fill="#60b020" /><path d="M3.800 11H9.500V17Q5 15 3.800 11" fill="#2878d0" /><path d="M16.200 11H10.500V17Q15 15 16.200 11" fill="#f0c020" /></>],
  ["structure 2", org],
  ["excel", excel],
];

const fileIcons = {
  up: <path d="M8 1L15 8H11.500V11H15V15H5V8H1z" fill="#8a8a8a" stroke="#333" />,
  eml: <><rect x="1" y="3" width="14" height="10" fill="#f4f4f4" stroke="#b8b8b8" /><path d="M1 3l7 6 7-6M1 13l5-5M15 13l-5-5" fill="none" stroke="#c0c0c0" /></>,
  zip: <><path d="M2 0h11v16H2z" fill="#fbe28a" stroke="#e0b840" /><path d="M13 9h2v6h-2" fill="#f4cc58" stroke="#d8a830" /><path d="M8 0v16" stroke="#707070" strokeWidth="3" strokeDasharray="1.500 1" /><rect x="7" y="5" width="3" height="5" fill="#ccc" stroke="#666" strokeWidth=".6" /></>,
  jpg: <><rect x="1" y="3" width="14" height="10" fill="#fff" stroke="#999" /><rect x="3" y="5" width="10" height="6" fill="#68b0e8" /><path d="M3 11V7q5 0 10 4" fill="#204860" /></>,
  txt: <><path d="M2.500 .5h8l3 3v12h-11z" fill="#fff" stroke="#888" /><path d="M4 4.500h6M4 6.500h8M4 8.500h8M4 10.500h8M4 12.500h8" stroke="#999" /></>,
  pdf: <><path d="M1 .5h14v15H1z" fill="#fafafa" stroke="#c8c8c8" /><path d="M3 12q4-4 5-9 1 6 6 6-6 0-11 4" fill="none" stroke="#d02020" strokeWidth="1.300" /></>,
};
fileIcons.tgz = fileIcons.zip;

const rightFiles = [
  ["[..]", "", "<DIR>", "2022/09/29 08:02", "----"],
  ["回复_ 回复_ 请帮忙看下2V3L..", "eml", "1,969,121", "2022/09/29 00:12"],
  ["Q22V3L80SWA0 working gerb..", "zip", "105,655", "2022/09/28 17:10"],
  ["Q12V3L80SWA0 working gerb..", "zip", "238,963", "2022/09/27 18:22"],
  ["2v3l80sw-print", "zip", "347,602", "2022/09/29 00:12"],
  ["2v3l80swa0-铣倒角要求", "jpg", "109,676", "2022/09/29 00:01"],
  ["2v3l80swa0-铣倒角", "jpg", "86,871", "2022/09/28 23:59"],
  ["2v3l80swa0各层更改清单", "txt", "4,700", "2022/09/27 09:11"],
  ["2v3l80swa0_new", "txt", "1,631", "2022/09/27 09:11"],
  ["2v3l80swa0_drl_map", "pdf", "6,316", "2022/09/27 12:42"],
  ["2v3l80swa0_cs_最小线宽3.937", "pdf", "25,084", "2022/09/27 12:43"],
  ["2v3l80swa0_cs_最小SMD19.6..", "pdf", "25,130", "2022/09/27 12:43"],
  ["2v3l80swa0_biaozhu", "pdf", "16,479", "2022/09/27 12:42"],
  ["2v3l80swa0_2rd_map", "pdf", "5,979", "2022/09/27 12:42"],
  ["2v3l80swa0", "zip", "61,454", "2022/09/29 00:08"],
  ["2v3l80swa0", "txt", "1,007", "2022/09/27 09:11"],
  ["2v3l80swa0", "tgz", "816,224", "2022/09/29 00:11"],
  ["2v3l80swa_paste", "zip", "945", "2022/09/29 00:10"],
  ["2v3l80swa_film", "zip", "26,576", "2022/09/29 00:10"],
  ["#2v3l80swa0", "zip", "53,137", "2022/09/29 00:11"],
];
const leftFiles = [["[..]", "", "<DIR>", "2022/09/29 08:56", "-a--"]];

function Drive({ win }) {
  return (
    <Icon w={14} h={16}>
      {win && <path d="M0 0h3v3H0zM4 0h3v3H4zM0 4h3v3H0zM4 4h3v3H4z" fill="#28b0f0" />}
      <path d="M2 8h10l2 3H0z" fill="#c8c8c8" />
      <rect x="0" y="11" width="14" height="4" fill="#3a3a3a" />
      <rect x="10" y="12" width="2" height="2" fill="#30e040" />
    </Icon>
  );
}

function DriveBar() {
  return (
    <div className="flex h-[29px] items-center text-[14px]">
      {["c", "d", "e", "f"].map((d) => (
        <button key={d} className={`flex h-[22px] w-[37px] items-center justify-center gap-[4px] border ${d === "e" ? "border-[#99d1ff] bg-[#cce8ff]" : "border-transparent"}`}>
          <Drive win={d === "c"} />{d}
        </button>
      ))}
      <button className="flex h-[22px] items-center gap-[4px] pl-[6px]">
        <Icon w={16}><circle cx="10" cy="6" r="6" fill="#58a8e0" /><path d="M6 4q5-4 7 2" fill="none" stroke="#c8e8fc" strokeWidth="1.500" /><path d="M0 6h11v7H0z" fill="#48b0f0" stroke="#2070a8" strokeWidth=".7" /><path d="M3 15h6" stroke="#555" strokeWidth="1.500" /></Icon>
        \
      </button>
    </div>
  );
}

function Pane({ path, active, files, status, sort, className }) {
  const cell = "p-0 whitespace-nowrap";
  const head = "border-r border-b border-[#d8d8d8] border-b-[#999] p-0 pl-[3px] text-left font-normal whitespace-nowrap";
  return (
    <div className={`flex min-w-0 flex-1 flex-col ${className}`}>
      <div className="flex h-[32px] items-center text-[14px]">
        <div className="flex h-[27px] w-[56px] items-center border border-[#7a7a7a] bg-white pl-[5px]">
          <Drive />
          <select aria-label={`drive ${path}`} className="ml-[5px] w-[15px] appearance-none bg-transparent"><option>e</option></select>
          <Icon w={9} h={6} className="ml-[1px]"><path d="M.5 .5l4 4 4-4" fill="none" stroke="#444" /></Icon>
        </div>
        <p className="flex-1 pl-[5px] leading-[20px] whitespace-pre"><Mixed text={"[ 无 ]  238,460,764 KB 可用，共 488,637,436 KB"} /></p>
        <span className="h-[25px] w-px bg-[#999]" />
        <button className="w-[22px] text-center">\</button>
        <button className="mr-[3px] w-[16px] text-center">..</button>
      </div>
      <div className="flex h-[22px] items-center text-[14px]">
        <div className={`flex h-full flex-1 items-center gap-[2px] border-t border-[#8c9cac] pl-[4px] leading-[20px] ${active ? "bg-[#99b4d1]" : "bg-[#bfcddb]"}`}>
          <Icon w={13} h={7}><path d="M0 0h13L6.500 7z" /></Icon>
          {path}
        </div>
        <button aria-label="favorites" className="flex w-[20px] justify-center"><Icon w={8}><path d="M4 0v8M0 4h8M1 1l6 6M7 1L1 7" stroke="#000" /></Icon></button>
        <button aria-label="history" className="mr-[3px] flex w-[18px] justify-center"><Icon w={9} h={5}><path d="M0 0h9L4.500 5z" /></Icon></button>
      </div>
      <div className="mt-[1px] flex min-h-0 flex-1 flex-col border border-[#999] bg-white">
        <table className="w-full table-fixed border-collapse text-[14px] leading-[20px]">
          <colgroup><col /><col className="w-[57px]" /><col className="w-[64px]" /><col className="w-[120px]" /><col className="w-[46px]" /></colgroup>
          <thead>
            <tr className="h-[24px] text-[16px]">
              <th className={`${head} bg-[#bcdcf4]`}>
                <span className="flex items-center gap-[2px]">
                  <Icon w={10} h={11}>{sort === "up" ? <path d="M5 0L10 5H6.500V11H3.500V5H0z" /> : <path d="M5 11L10 6H6.500V0H3.500V6H0z" />}</Icon>文件名
                </span>
              </th>
              <th className={head}>扩展名</th>
              <th className={head}>大小</th>
              <th className={head}>日期</th>
              <th className={`${head} border-r-0`}>属性</th>
            </tr>
          </thead>
          <tbody>
            {files.map(([name, ext, size, date, attr], i) => (
              <tr key={i} className={`h-[21px] ${active && i === 0 ? "bg-[#cce8ff] outline outline-[#99d1ff] -outline-offset-1" : ""}`}>
                <td className={cell}><span className="flex items-center gap-[3px] pl-[2px]"><Icon w={16}>{fileIcons[ext || "up"]}</Icon><span><Mixed text={name} /></span></span></td>
                <td className={cell}>{ext}</td>
                <td className={cell}><span className={`flex justify-end ${size === "<DIR>" ? "pr-[20px]" : "pr-[7px]"}`}>{size}</span></td>
                <td className={`${cell} pl-[1px]`}>{date}</td>
                <td className={`${cell} pl-[1px]`}>{attr || "-a--"}</td>
              </tr>
            ))}
          </tbody>
        </table>
        <p className="mt-auto h-[25px] border-t border-[#ccc] bg-[#f0f0f0] pl-[2px] text-[14px] leading-[24px] whitespace-nowrap"><Mixed text={status} /></p>
      </div>
    </div>
  );
}

function TotalCommander() {
  return (
    <section aria-label="Total Commander" className={`absolute top-[35px] left-[808px] flex h-[793px] w-[1086px] flex-col border border-[#444] bg-[#f0f0f0] text-black shadow-[0_6px_22px_rgba(0,0,0,0.55)] ${SANS}`}>
      <header className={`flex h-[30px] shrink-0 items-center bg-white pl-[8px] text-[13px] ${TITLE}`}>
        <Icon w={16}>
          <path d="M0 0h16v16H0z" fill="#1838a8" /><rect x="4" y="0" width="8" height="6" fill="#d0e0f8" /><rect x="8" y="1" width="2" height="4" fill="#1838a8" />
          <rect x="2" y="8" width="12" height="7" fill="#fff" /><text x="8" y="14.500" fontSize="7.500" fontWeight="bold" textAnchor="middle" fill="#a02020">64</text>
        </Icon>
        <h2 className="ml-[5px] flex-1 leading-[20px] whitespace-nowrap">Administrator^ - Total Commander (x64) 9.20 - WwW.DaYanZai.Me</h2>
        <WindowButtons color="#000" />
      </header>
      <nav className="flex h-[20px] shrink-0 items-center gap-[15px] border-b border-[#999] bg-white px-[7px] text-[12px] leading-[18px] whitespace-nowrap">
        {["文件(F)", "标记(M)", "命令(C)", "网络(N)", "显示(W)", "配置(O)", "开始(S)"].map((m) => <button key={m}>{m}</button>)}
        <button className="ml-auto">帮助(H)</button>
      </nav>
      <div className="flex h-[32px] shrink-0 items-center border-b border-[#999] bg-white">
        {tools.map((t, i) =>
          t ? (
            <button key={i} aria-label={t[0]} className={`flex h-[28px] w-[29px] shrink-0 items-center justify-center border ${t[2] ? "border-[#99d1ff] bg-[#cce8ff]" : "border-transparent"}`}>
              <Icon w={18} vb="0 0 20 20" h={18}>{t[1]}</Icon>
            </button>
          ) : (
            <span key={i} className="mx-[4px] h-[25px] w-px shrink-0 bg-[#999]" />
          )
        )}
      </div>
      <div className="flex shrink-0 border-b border-[#999] bg-white pl-[8px]">
        <div className="w-[557px] pl-[3px]"><DriveBar /></div>
        <div className="pl-[3px]"><DriveBar /></div>
      </div>
      <div className="flex min-h-0 flex-1">
        <span className="mr-[4px] w-[5px] shrink-0 border-r border-[#999] bg-white" />
        <Pane path="e:\input\*.*" files={leftFiles} sort="up" status="已选择 0 KB / 0 KB，0 / 0 个文件" className="max-w-[520px]" />
        <aside className="flex w-[37px] shrink-0 flex-col items-center gap-[12px] pt-[104px]">
          {gutterTools.map(([n, art]) => <button key={n} aria-label={n}><Icon w={17} vb="0 0 20 20" h={20}>{art}</Icon></button>)}
        </aside>
        <Pane path="e:\inpu\2v3l80swa0.zip\*.*" active files={rightFiles} sort="down" status="已选择 0 KB / 3,811 KB，0 / 19 个文件" className="" />
      </div>
      <div className="mt-[3px] flex h-[28px] shrink-0 items-center text-[14px]">
        <label htmlFor="cmd" className="w-[363px] pr-[4px] text-right">e:\inpu&gt;</label>
        <div className="mr-[1px] flex h-full flex-1 items-center border border-[#7a7a7a] bg-white pr-[4px]">
          <input id="cmd" className="h-full flex-1 px-[4px] outline-none" />
          <button aria-label="command history"><Icon w={9} h={6}><path d="M.5 .5l4 4 4-4" fill="none" stroke="#444" /></Icon></button>
        </div>
      </div>
      <div className="flex h-[30px] shrink-0 items-center pt-[3px] pr-[6px] text-[14px] leading-[20px]">
        {["F3 查看", "F4 编辑", "F5 复制", "F6 移动", "F7 新建文件夹", "F8 删除", "Alt+F4 退出"].map((f, i) => (
          <button key={f} className={`h-[24px] flex-1 whitespace-nowrap ${i ? "border-l border-[#999]" : ""}`}><Mixed text={f} /></button>
        ))}
      </div>
    </section>
  );
}

function Notice() {
  return (
    <section aria-label="系统提示" className="absolute right-[1px] bottom-0 h-[87px] w-[215px] overflow-hidden border-2 border-b-0 border-[#f4f8fc] bg-[#b8c8dc] font-['Noto_Sans_CJK_SC',sans-serif]">
      <header className="flex h-[21px] items-center gap-[5px] bg-linear-to-b from-[#b0c4d8] to-[#d8e4f0] pl-[5px] text-[10px] font-black text-black">
        <Icon w={19} h={16}><path d="M1 8L8 1 15 8M3 7V14H9" fill="#fff" stroke="#c82828" strokeWidth="2" /><path d="M12 15Q5 10 7 7 10 5 12 8 14 5 17 7 20 10 12 15" fill="#f06868" stroke="#a07070" /></Icon>
        系统提示
      </header>
      <div className="mx-[1px] mt-[3px] h-[64px] border border-[#a0b4cc] bg-linear-to-b from-white to-[#cfe2f4] pt-[17px] pl-[20px] text-[19px] leading-[31px] font-medium whitespace-nowrap text-[#80604c]">
        <p>有系统消息</p>
        <p className="pl-[66px]">请注意查收!</p>
      </div>
    </section>
  );
}

export default function App() {
  return (
    <div className="relative h-screen w-full overflow-hidden bg-black">
      <CamEditor />
      <Acrobat />
      <TotalCommander />
      <Notice />
    </div>
  );
}
